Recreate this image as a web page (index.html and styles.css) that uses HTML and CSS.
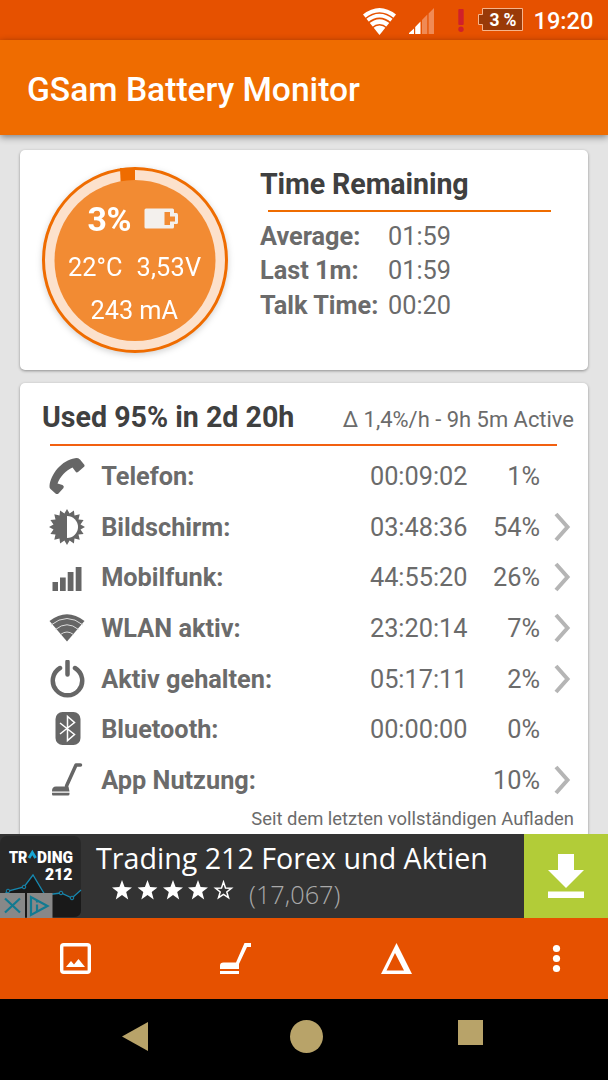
FILE: index.html
```html
<!DOCTYPE html>
<html lang="de">
<head>
<meta charset="utf-8">
<title>GSam Battery Monitor</title>
<link rel="stylesheet" href="styles.css">
</head>
<body>
<svg class="defs" width="0" height="0">
  <defs>
    <symbol id="chevron" viewBox="0 0 18 32"><path d="M3 3 14.5 16 3 29" fill="none" stroke="#b5b5b5" stroke-width="4"/></symbol>
    <symbol id="star" viewBox="0 0 20 20"><path d="M10 0 12.6 7.1 20 7.4 14.2 12 16.2 19.4 10 15.1 3.8 19.4 5.8 12 0 7.4 7.4 7.1z"/></symbol>
  </defs>
</svg>
<div class="screen">
  <header class="status">
    <svg class="status-wifi" width="33" height="28" viewBox="0 0 33 28"><path d="M0 6.500Q16.500-6.500 33 6.500L16.500 27z" fill="#fff"/><g fill="none" stroke="#e65100" stroke-width="1.500"><path d="M2 11Q16.500-1 31 11M5 15.300Q16.500 5.500 28 15.300M9 20Q16.500 13.500 24 20"/></g></svg>
    <svg class="status-signal" width="25" height="26" viewBox="0 0 25 26"><path d="M0 26V25L5 20.5V26zM6.2 26V19L11.5 13.5V26z" fill="#fff"/><path d="M13 26V12L18.3 6.5V26zM19.6 26V5.5L25 0V26z" fill="#f08a55"/></svg>
    <svg class="status-alert" width="6" height="24" viewBox="0 0 6 24"><rect x=".3" width="5.4" height="16" rx="1" fill="#d0202a"/><circle cx="3" cy="20.200" r="2.700" fill="#d0202a"/></svg>
    <div class="status-battery"><svg width="45" height="23" viewBox="0 0 45 23"><path d="M4.5.5H44.5V22.5H4.5V16.500H.5V6.500H4.500z" fill="#993a08" stroke="#f6b48c"/></svg><span>3 %</span></div>
    <time class="clock">19:20</time>
  </header>
  <div class="appbar"><h1>GSam Battery Monitor</h1></div>
  <main class="content">
    <section class="card summary">
      <svg class="gauge" width="194" height="194" viewBox="0 0 194 194">
        <circle cx="97" cy="97" r="91.500" fill="#fce1cc" stroke="#ef6c00" stroke-width="3"/>
        <path d="M97 97V5H82L86 97z" fill="#ef6c00"/>
        <circle cx="97" cy="97.500" r="80.500" fill="#f28b33"/>
        <text class="gauge-main" x="49.500" y="67.500" textLength="44">3%</text>
        <path d="M108 45.500H134.500Q136 45.500 136 47V50H138.500Q140 50 140 52V59.500Q140 61 138.500 61H136V64Q136 65.500 134.500 65.500H108Q106.500 65.500 106.500 64V47Q106.500 45.500 108 45.500z" fill="#f3f0ed"/><path d="M126.500 49H132V53.500H137V58.500H132V62H126.500z" fill="#f28b33"/>
        <text class="gauge-text" x="30" y="112.500" textLength="54.500">22°C</text>
        <text class="gauge-text" x="98.500" y="112.500" textLength="64.500">3,53V</text>
        <text class="gauge-text" x="52.500" y="155.500" textLength="87.500">243 mA</text>
      </svg>
      <div class="remaining">
        <h2>Time Remaining</h2>
        <dl>
          <dt>Average:</dt><dd>01:59</dd>
          <dt>Last 1m:</dt><dd>01:59</dd>
          <dt>Talk Time:</dt><dd>00:20</dd>
        </dl>
      </div>
    </section>
    <section class="card usage">
      <div class="usage-head"><h2>Used 95% in 2d 20h</h2><p>Δ 1,4%/h - 9h 5m Active</p></div>
      <ul>
        <li><svg width="38" height="38" viewBox="0 0 38 38" fill="#666"><path d="M1.500 29C2.500 17 14 3 27 1.200Q30 .7 32 2.500L36.500 8Q37 9.300 35.500 10.300L30 15Q28.500 16 27.500 14.500L24.500 10.500C18 13 12 20 9.500 26.500L14.500 28Q16.500 29 15.500 31L10.500 36.500Q9 37.500 7.500 36.500L2.500 32Q1.300 31 1.500 29z"/></svg><b>Telefon:</b><span>00:09:02</span><span>1%</span></li>
        <li><svg width="38" height="38" viewBox="0 0 38 38"><path d="M19.000 1.000 21.600 5.500 25.900 2.400 26.500 7.500 31.700 6.300 30.500 11.500 35.600 12.100 32.500 16.400 37.000 19.000 32.500 21.600 35.600 25.900 30.500 26.500 31.700 31.700 26.500 30.500 25.900 35.600 21.600 32.500 19.000 37.000 16.400 32.500 12.100 35.600 11.500 30.500 6.300 31.700 7.500 26.500 2.400 25.900 5.500 21.600 1.000 19.000 5.500 16.400 2.400 12.100 7.500 11.500 6.300 6.300 11.500 7.500 12.100 2.400 16.400 5.500z" fill="#666"/><path d="M19 8A11 11 0 0 1 19 30z" fill="#fff"/></svg><b>Bildschirm:</b><span>03:48:36</span><span>54%</span><svg width="18" height="32"><use href="#chevron"/></svg></li>
        <li><svg width="38" height="38" viewBox="0 0 38 38" fill="#666"><path d="M4.500 24h5.500v9H4.500zM12 19.500h5.700v13.500H12zM19.700 14H25.500v19h-5.800zM27.700 9H33.500v24h-5.800z"/></svg><b>Mobilfunk:</b><span>44:55:20</span><span>26%</span><svg width="18" height="32"><use href="#chevron"/></svg></li>
        <li><svg width="38" height="38" viewBox="0 0 38 38"><path d="M1.500 12Q19-1.500 36.500 12L19 32.500z" fill="#666"/><path d="M3 16Q19 3 35 16M7.500 20.500Q19 11 30.500 20.500M12.500 25.500Q19 20.500 25.500 25.500" fill="none" stroke="#ddd" stroke-width="1"/></svg><b>WLAN aktiv:</b><span>23:20:14</span><span>7%</span><svg width="18" height="32"><use href="#chevron"/></svg></li>
        <li><svg width="38" height="38" viewBox="0 0 38 38" fill="none" stroke="#666" stroke-width="4.500" stroke-linecap="round"><path d="M12 8A14.700 14.700 0 1 0 27 8M19.500 1.700V14.500"/></svg><b>Aktiv gehalten:</b><span>05:17:11</span><span>2%</span><svg width="18" height="32"><use href="#chevron"/></svg></li>
        <li><svg width="38" height="38" viewBox="0 0 38 38"><rect x="7.500" y="2" width="25" height="33" rx="7" fill="#666"/><path d="M12 13 26.500 24.500 19.500 30.500V6.500L26.500 12.500 12 24" fill="none" stroke="#fff" stroke-width="1.500"/></svg><b>Bluetooth:</b><span>00:00:00</span><span>0%</span></li>
        <li><svg width="38" height="38" viewBox="0 0 38 38"><path d="M32.500 4H28L18.500 25" fill="none" stroke="#666" stroke-width="3.500" stroke-linecap="round" stroke-linejoin="round"/><path d="M4 30Q4 25.500 8 25.500H20.500L21.500 30.500H4zM4 31.700H21.500V33Q21.500 34.500 20 34.500H5Q4 34.500 4 33z" fill="#666"/></svg><b>App Nutzung:</b><span></span><span>10%</span><svg width="18" height="32"><use href="#chevron"/></svg></li>
      </ul>
      <p class="since">Seit dem letzten vollständigen Aufladen</p>
    </section>
  </main>
  <aside class="ad">
    <svg class="ad-logo" width="82" height="84" viewBox="0 0 82 84">
      <rect y="2" width="81" height="81" rx="7" fill="#282828"/>
      <path d="M0 64 8 57 24 53 33 41 45 61 61 59 72 64 81 56V76Q81 83 74 83H0z" fill="#191919"/>
      <path d="M0 64 8 57 24 53 33 41 45 61 61 59 72 64 81 56" fill="none" stroke="#1688b0" stroke-width="1.300"/>
      <g fill="#282828" stroke="#1688b0"><circle cx="8" cy="57" r="1.800"/><circle cx="24" cy="53" r="1.800"/><circle cx="61" cy="59" r="1.800"/><circle cx="72" cy="64" r="1.800"/></g>
      <text class="logo-text" x="9" y="29" textLength="18.500" lengthAdjust="spacingAndGlyphs">TR</text>
      <path d="M29 24 32.300 18.500 35.600 24" fill="none" stroke="#17a6d6" stroke-width="2.800"/>
      <text class="logo-text" x="37" y="29" textLength="36" lengthAdjust="spacingAndGlyphs">DING</text>
      <text class="logo-text" x="45" y="46" textLength="27.500" lengthAdjust="spacingAndGlyphs">212</text>
      <path d="M0 59H25V84H0zM27 59H52.500V84H27z" fill="#888"/>
      <path d="M5 64.500 20 78.500M20 64.500 5 78.500M31 63V81L47.500 72zM37 70.500V77M37 67V68.500" fill="none" stroke="#127a91" stroke-width="2.200"/>
    </svg>
    <div class="ad-copy">
      <p class="ad-title">Trading 212 Forex und Aktien</p>
      <div class="rating"><svg width="122" height="20" viewBox="0 0 122 20" fill="#fff"><use href="#star" width="20" height="20"/><use href="#star" x="25.500" width="20" height="20"/><use href="#star" x="51" width="20" height="20"/><use href="#star" x="76" width="20" height="20"/><path d="M111.500 2 113.500 8 119.500 8.200 114.800 12 116.500 17.700 111.500 14.300 106.500 17.700 108.200 12 103.500 8.200 109.500 8z" fill="none" stroke="#fff" stroke-width="1.500"/></svg><span>(17,067)</span></div>
    </div>
    <div class="download"><svg width="36" height="44" viewBox="0 0 36 44" fill="#fff"><path d="M10 0H26V16H36L18 34 0 16H10zM0 37.500H36V44H0z"/></svg></div>
  </aside>
  <nav class="toolbar">
    <svg width="31" height="31" viewBox="0 0 31 31"><rect x="1.700" y="1.700" width="27.600" height="27.600" rx="2" fill="none" stroke="#fff" stroke-width="3.400"/><path d="M6 24 11 18 14 21.500 18.500 16 25 24z" fill="#fff"/></svg>
    <svg width="31" height="31" viewBox="0 0 31 31" fill="#fff"><path d="M0 26V22.500Q0 19.500 3.500 19.500H16L24.500 0H31V4H27L19 21V26zM0 28H19V31H0z"/></svg>
    <svg width="31" height="31" viewBox="0 0 31 31"><path d="M15.500 0 31 31H0zM14 10 5.500 27.500H23z" fill="#fff" fill-rule="evenodd"/></svg>
    <svg width="31" height="31" viewBox="0 0 31 31" fill="#fff"><circle cx="15.500" cy="5.500" r="3.600"/><circle cx="15.500" cy="15.500" r="3.600"/><circle cx="15.500" cy="25.500" r="3.600"/></svg>
  </nav>
  <footer class="navbar">
    <svg width="26" height="29" viewBox="0 0 26 29"><path d="M0 14.500 26 0V29z" fill="#b8a369"/></svg>
    <svg width="33" height="33" viewBox="0 0 33 33"><circle cx="16.500" cy="16.500" r="16.500" fill="#b8a369"/></svg>
    <svg width="25" height="25" viewBox="0 0 25 25"><path d="M0 0H25V25H0z" fill="#b8a369"/></svg>
  </footer>
</div>
</body>
</html>
```

FILE: styles.css
```css
* { box-sizing: border-box; }
body, h1, h2, p, ul, dl, dd { margin: 0; padding: 0; }
body { background: #000; font-family: Roboto, "Noto Sans", sans-serif; color: #6b6b6b; font-size: 25.3px; }
svg { display: block; flex: none; }
.defs { position: absolute; }
.screen { display: grid; grid-template-rows: 40px 95px 699px 84px 81px 81px; width: 608px; height: 1080px; overflow: hidden; }

.status { background: #e65100; color: #fff; display: flex; align-items: flex-start; padding-top: 8px; padding-left: 362.500px; }
.status-signal { margin: 0 0 0 13px; }
.status-alert { margin: 1px 0 0 24px; }
.status-battery { display: grid; margin-left: 14px; }
.status-battery > * { grid-area: 1 / 1; }
.status-battery span { padding-left: 12px; font-size: 17.500px; font-weight: 700; line-height: 24px; letter-spacing: -.2px; white-space: nowrap; }
.clock { margin-left: 11px; font-size: 23.600px; font-weight: 500; line-height: 27px; }

.appbar { background: #ef6c00; padding-left: 27px; display: flex; align-items: center; box-shadow: 0 2px 7px rgba(0,0,0,.45); z-index: 1; }
h1 { color: #fff; font-size: 33.600px; font-weight: 500; line-height: 40px; padding-top: 4px; white-space: nowrap; }

.content { background: #e4e4e4; padding: 15px 20px 0; overflow: hidden; display: flex; flex-direction: column; gap: 13px; }
.card { background: #fff; border-radius: 5px; box-shadow: 0 1px 3px rgba(0,0,0,.38); flex: none; }
h2 { font-size: 28.600px; font-weight: 700; color: #3f4040; line-height: 34px; white-space: nowrap; }

.summary { height: 220px; display: flex; padding: 12.500px 37px 0 18px; }
.gauge { filter: drop-shadow(0 2px 3px rgba(0,0,0,.18)); }
.gauge text { fill: #fff; }
.gauge-main { font-size: 33.800px; font-weight: 700; }
.gauge-text { font-size: 25.300px; }
.remaining { flex: 1; padding: 4.500px 0 0 28px; }
.remaining h2 { height: 44px; letter-spacing: -.1px; }
.remaining dl { position: relative; display: grid; grid-template-columns: 128px auto; line-height: 34.500px; padding-top: 8.500px; white-space: nowrap; }
.remaining dl::before { content: ""; position: absolute; top: -1px; left: 8px; right: 0; height: 2px; background: #ef6c00; }
dt { font-weight: 700; }

.usage { height: 470px; padding: 17px 14px 0 22px; }
.usage-head { display: flex; justify-content: space-between; align-items: baseline; height: 43.500px; }
.usage-head p { font-size: 21.950px; white-space: nowrap; }
ul { list-style: none; }
ul::before { content: ""; display: block; height: 2px; margin: 0 17px 5.500px 8px; background: #f26010; }
li { display: grid; grid-template-columns: 53.200px 1fr 110px 72.500px 34px; align-items: center; height: 50.600px; padding-left: 6px; white-space: nowrap; line-height: 36px; }
li b { font-weight: 700; }
li b, li span { padding-top: 2px; }
li span { text-align: right; }
li > svg:last-child { margin-left: 13px; }
.since { font-size: 18.400px; line-height: 24px; text-align: right; margin-top: 2px; }

.ad { background: #333; display: flex; z-index: 1; }
.ad-copy { width: 442px; padding: 5px 0 0 14px; color: #fff; font-family: "Open Sans", "Noto Sans", sans-serif; }
.ad-title { font-size: 28.650px; line-height: 38px; white-space: nowrap; }
.rating { display: flex; margin: 3px 0 0 16px; gap: 15px; }
.rating span { color: #aaa; font-size: 25.300px; font-weight: 300; line-height: 28px; }
.logo-text { font-family: Roboto, sans-serif; font-size: 16.500px; font-weight: 900; fill: #fff; }
.download { background: #b2cc38; width: 84px; padding: 20px 0 0 24px; }

.toolbar { background: #e65100; display: flex; padding: 25px 0 0 59.500px; }
.toolbar svg:nth-child(2) { margin-left: 129px; }
.toolbar svg:nth-child(3) { margin-left: 130px; }
.toolbar svg:nth-child(4) { margin-left: 129.500px; }
.navbar { background: #000; display: flex; padding: 20px 0 0 122px; }
.navbar svg:first-child { margin-top: 3px; }
.navbar svg:nth-child(2) { margin: 1px 0 0 142px; }
.navbar svg:nth-child(3) { margin: 1px 0 0 135px; }
```
